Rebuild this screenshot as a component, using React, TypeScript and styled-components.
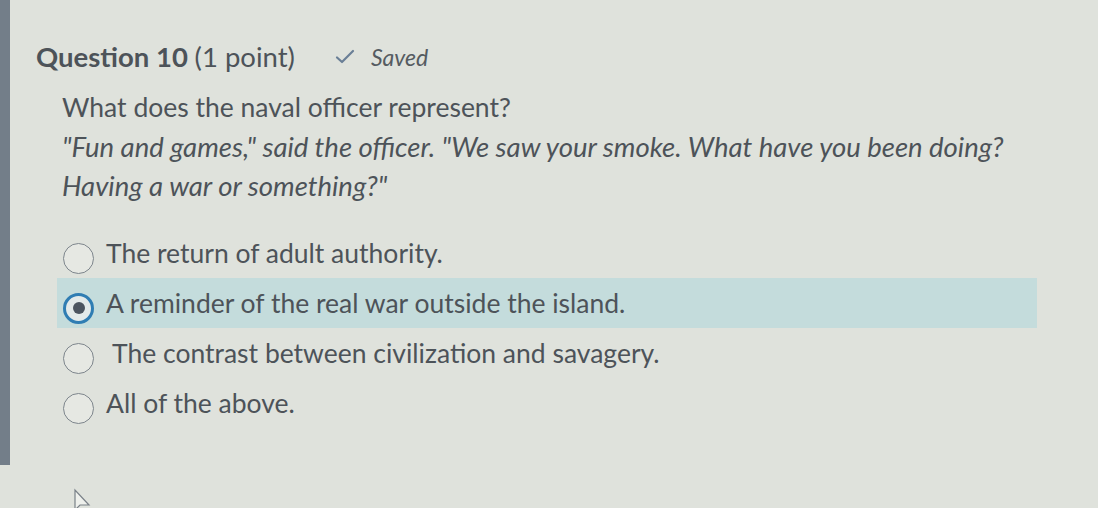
import React from 'react';
import styled, { createGlobalStyle } from 'styled-components';

const GlobalStyle = createGlobalStyle`
  html, body {
    margin: 0;
    padding: 0;
    background: #dfe2dc;
  }
  body {
    font-family: Lato, "Open Sans", sans-serif;
    color: #4d5359;
    overflow: hidden;
  }
`;

const Page = styled.div`
  position: relative;
  display: flex;
  width: 1098px;
  height: 508px;
  background: #dfe2dc;
`;

const Rail = styled.div`
  width: 10px;
  height: 465px;
  flex-shrink: 0;
  background: #737e89;
`;

const Main = styled.div`
  flex: 1;
  padding: 40px 0 0 26px;
`;

const Header = styled.div`
  display: flex;
  align-items: center;
  gap: 40px;
`;

const Title = styled.h2`
  margin: 0;
  font-size: 27.5px;
  font-weight: 700;
  line-height: 34px;

  span {
    font-weight: 400;
  }
`;

const Saved = styled.div`
  display: flex;
  align-items: center;
  gap: 16px;
  font-size: 23px;
  font-style: italic;
  color: #555b61;
`;

const Body = styled.div`
  padding: 14px 0 0 26px;
`;

const Prompt = styled.p`
  margin: 0;
  font-size: 26.5px;
  line-height: 39px;
`;

const Quote = styled.p`
  margin: 0 0 23px;
  font-size: 27.5px;
  font-style: italic;
  line-height: 39px;
  white-space: nowrap;
`;

const Options = styled.div`
  display: flex;
  flex-direction: column;
  width: 980px;
  margin-left: -5px;
`;

const Option = styled.label<{ $selected?: boolean }>`
  display: flex;
  align-items: center;
  gap: 12px;
  height: 50px;
  padding-left: 6px;
  font-size: 26.5px;
  background: ${p => (p.$selected ? '#c4dcdc' : 'transparent')};
`;

const Radio = styled.span<{ $selected?: boolean }>`
  width: 31px;
  height: 31px;
  border-radius: 50%;
  box-sizing: border-box;
  flex-shrink: 0;
  display: flex;
  align-items: center;
  justify-content: center;
  border: ${p => (p.$selected ? '3px solid #2f7db3' : '1.5px solid #7d858c')};
  background: ${p => (p.$selected ? '#e3eaea' : '#e6e8e3')};
  margin-top: 10px;

  &::after {
    content: '';
    display: ${p => (p.$selected ? 'block' : 'none')};
    width: 12px;
    height: 12px;
    border-radius: 50%;
    background: #4c5560;
  }
`;

const Text = styled.span`
  line-height: 1;
`;

const Cursor = styled.svg`
  position: absolute;
  left: 72px;
  top: 488px;
`;

const answers = [
  'The return of adult authority.',
  'A reminder of the real war outside the island.',
  '\u00a0The contrast between civilization and savagery.',
  'All of the above.',
];

export default function App() {
  const selected = 1;
  return (
    <>
      <GlobalStyle />
      <Page>
        <Rail />
        <Main>
          <Header>
            <Title>
              Question 10 <span>(1 point)</span>
            </Title>
            <Saved>
              <svg width="20" height="16" viewBox="0 0 20 16">
                <path d="M2 8.5 L7 13 L18 2" fill="none" stroke="#6a7f96" strokeWidth="2.2" strokeLinecap="round" strokeLinejoin="round" />
              </svg>
              Saved
            </Saved>
          </Header>
          <Body>
            <Prompt>What does the naval officer represent?</Prompt>
            <Quote>
              "Fun and games," said the officer. "We saw your smoke. What have you been doing?
              <br />
              Having a war or something?"
            </Quote>
            <Options>
              {answers.map((a, i) => (
                <Option key={a} $selected={i === selected}>
                  <Radio $selected={i === selected} />
                  <Text>{a}</Text>
                </Option>
              ))}
            </Options>
          </Body>
        </Main>
        <Cursor width="20" height="24" viewBox="0 0 20 24">
          <path d="M3 2 L3 22 L8 17 L17 17 Z" fill="#eef0ec" stroke="#7a8188" strokeWidth="1.2" />
        </Cursor>
      </Page>
    </>
  );
}
